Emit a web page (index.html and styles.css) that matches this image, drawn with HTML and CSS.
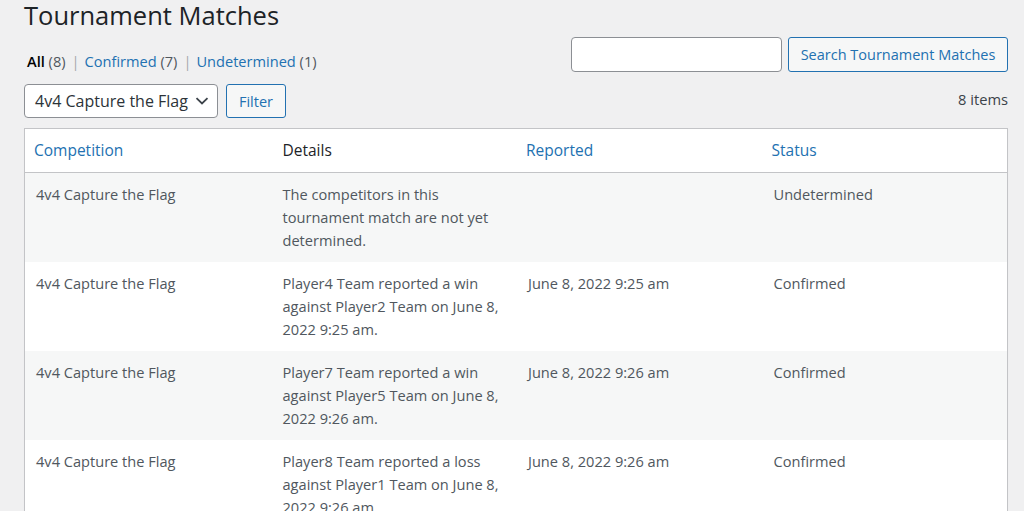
FILE: index.html
```html
<!DOCTYPE html>
<html lang="en">
<head>
<meta charset="utf-8">
<title>Tournament Matches</title>
<link rel="stylesheet" href="styles.css">
</head>
<body>
<div class="wrap">
  <h1 class="page-title">Tournament Matches</h1>
  <div class="top-row">
    <ul class="subsubsub">
      <li><a class="current" href="#">All <span class="count">(8)</span></a><span class="sep">|</span></li>
      <li><a href="#">Confirmed <span class="count">(7)</span></a><span class="sep">|</span></li>
      <li><a href="#">Undetermined <span class="count">(1)</span></a></li>
    </ul>
    <div class="search-box">
      <input class="search-input" type="search" value="">
      <button class="button search-button">Search Tournament Matches</button>
    </div>
  </div>
  <div class="tablenav">
    <div class="actions">
      <div class="select">
        <span class="select-label">4v4 Capture the Flag</span>
        <svg class="chevron" width="14" height="8" viewBox="0 0 14 8"><polyline points="1.5,1.2 7,6.5 12.5,1.2" fill="none" stroke="#3c434a" stroke-width="1.8"/></svg>
      </div>
      <button class="button">Filter</button>
    </div>
    <div class="displaying-num">8 items</div>
  </div>
  <table class="list-table">
    <thead>
      <tr>
        <th class="sortable"><a href="#">Competition</a></th>
        <th>Details</th>
        <th class="sortable"><a href="#">Reported</a></th>
        <th class="sortable"><a href="#">Status</a></th>
      </tr>
    </thead>
    <tbody>
      <tr>
        <td>4v4 Capture the Flag</td>
        <td>The competitors in this tournament match are not yet determined.</td>
        <td></td>
        <td>Undetermined</td>
      </tr>
      <tr>
        <td>4v4 Capture the Flag</td>
        <td>Player4 Team reported a win against Player2 Team on June 8, 2022 9:25 am.</td>
        <td>June 8, 2022 9:25 am</td>
        <td>Confirmed</td>
      </tr>
      <tr>
        <td>4v4 Capture the Flag</td>
        <td>Player7 Team reported a win against Player5 Team on June 8, 2022 9:26 am.</td>
        <td>June 8, 2022 9:26 am</td>
        <td>Confirmed</td>
      </tr>
      <tr>
        <td>4v4 Capture the Flag</td>
        <td>Player8 Team reported a loss against Player1 Team on June 8, 2022 9:26 am.</td>
        <td>June 8, 2022 9:26 am</td>
        <td>Confirmed</td>
      </tr>
    </tbody>
  </table>
</div>
</body>
</html>
```
FILE: styles.css
```css
* { box-sizing: border-box; }
html, body { margin: 0; padding: 0; }
body {
  background: #f0f0f1;
  font-family: "Open Sans", "Noto Sans", sans-serif;
  color: #3c434a;
  font-size: 14.6px;
  overflow: hidden;
  height: 511px;
}
a { color: #2271b1; text-decoration: none; }
.wrap { padding: 0 16px 0 24px; }
.page-title {
  margin: 0;
  font-size: 25.5px;
  font-weight: 400;
  line-height: 30px;
  color: #1d2327;
}
.top-row {
  display: flex;
  justify-content: space-between;
  align-items: flex-start;
  margin-top: 7px;
}
.subsubsub {
  list-style: none;
  margin: 0;
  padding: 13px 0 0 3px;
  display: flex;
  line-height: 23px;
  color: #646970;
}
.subsubsub .count { color: #50575e; }
.subsubsub a.current { color: #000; font-weight: 600; }
.subsubsub a.current .count { font-weight: 400; color: #50575e; }
.subsubsub .sep { color: #a7aaad; margin: 0 5px 0 6px; }
.search-box { display: flex; gap: 6px; padding-right: 0; }
.search-input {
  width: 211px;
  height: 35px;
  border: 1px solid #8c8f94;
  border-radius: 4px;
  background: #fff;
  margin: 0;
  font: inherit;
}
.button {
  height: 35px;
  margin: 0;
  padding: 0 12px;
  border: 1px solid #2271b1;
  border-radius: 3px;
  background: #f6f7f7;
  color: #2271b1;
  font-family: inherit;
  font-size: 14.5px;
  line-height: 33px;
  white-space: nowrap;
}
.search-button { width: 220px; padding: 0; }
.tablenav {
  display: flex;
  justify-content: space-between;
  align-items: center;
  margin-top: 11px;
  height: 34px;
}
.actions { display: flex; gap: 8px; align-items: center; }
.actions .button { height: 34px; width: 60px; padding: 0; }
.select {
  width: 194px;
  height: 34px;
  border: 1px solid #8c8f94;
  border-radius: 4px;
  background: #fff;
  display: flex;
  align-items: center;
  justify-content: space-between;
  padding: 0 8px 0 10px;
  color: #2c3338;
  font-size: 16px;
}
.chevron { display: block; }
.displaying-num { color: #3c434a; font-size: 14.7px; line-height: 23px; margin-top: -3px; }
.list-table {
  margin-top: 10px;
  width: 100%;
  table-layout: fixed;
  border-collapse: separate;
  border-spacing: 0;
  border: 1px solid #c3c4c7;
  background: #fff;
  box-shadow: 0 1px 1px rgba(0,0,0,0.04);
}
.list-table th {
  text-align: left;
  font-weight: 400;
  font-size: 15.5px;
  line-height: 23px;
  padding: 10px 12px;
  color: #1d2327;
  border-bottom: 1px solid #c3c4c7;
}
.list-table th.sortable { padding-left: 10px; }
.list-table th:first-child { padding-left: 9px; }
.list-table td {
  vertical-align: top;
  padding: 10px 12px;
  line-height: 23px;
  color: #50575e;
  font-size: 14.6px;
}
.list-table td:first-child { padding-left: 11px; }
.list-table tbody tr:nth-child(odd) { background: #f6f7f7; }
```
